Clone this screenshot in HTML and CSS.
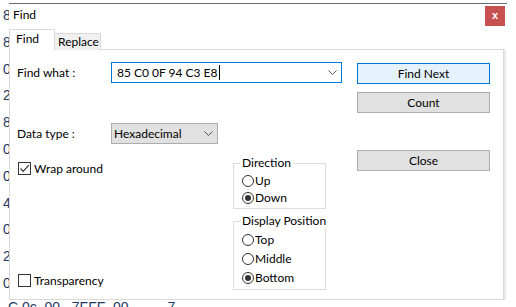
FILE: index.html
```html
<!DOCTYPE html>
<html lang="en">
<head>
<meta charset="UTF-8">
<title>Find</title>
<link rel="stylesheet" href="styles.css">
</head>
<body>
<div class="editor">
  <div class="editor-col">8<br>8<br>0<br>2<br>8<br>0<br>0<br>4<br>0<br>2<br>0</div>
  <div class="editor-row">C 0c  00   7FFF  00    ..    7</div>
</div>

<div class="dialog">
  <div class="titlebar">
    <span class="title">Find</span>
    <div class="close">x</div>
  </div>
  <div class="tabs">
    <div class="tab active">Find</div>
    <div class="tab">Replace</div>
  </div>
  <div class="panel">
    <div class="fields">
      <div class="row">
        <label class="label">Find what :</label>
        <div class="combo">
          <span>85 C0 0F 94 C3 E8</span><span class="caret"></span>
          <svg class="chevron" width="9" height="5" viewBox="0 0 9 5"><polyline points="0.5,0.5 4.5,4.5 8.5,0.5" fill="none" stroke="#555" stroke-width="1"/></svg>
        </div>
      </div>
      <div class="row type-row">
        <label class="label">Data type :</label>
        <div class="select">
          <span>Hexadecimal</span>
          <svg class="chevron" width="9" height="5" viewBox="0 0 9 5"><polyline points="0.5,0.5 4.5,4.5 8.5,0.5" fill="none" stroke="#555" stroke-width="1"/></svg>
        </div>
      </div>
      <div class="options">
        <div class="checks">
          <div class="check">
            <span class="box"><svg width="11" height="11" viewBox="0 0 11 11"><polyline points="1.5,5.5 4.2,8.3 9.8,2.2" fill="none" stroke="#333" stroke-width="1.2"/></svg></span>
            Wrap around
          </div>
          <div class="check"><span class="box"></span>Transparency</div>
        </div>
        <div class="groups">
          <fieldset class="group direction">
            <legend>Direction</legend>
            <div class="radio"><span class="circle"></span>Up</div>
            <div class="radio"><span class="circle on"></span>Down</div>
          </fieldset>
          <fieldset class="group position">
            <legend>Display Position</legend>
            <div class="radio"><span class="circle"></span>Top</div>
            <div class="radio"><span class="circle"></span>Middle</div>
            <div class="radio"><span class="circle on"></span>Bottom</div>
          </fieldset>
        </div>
      </div>
    </div>
    <div class="buttons">
      <div class="btn default">Find Next</div>
      <div class="btn count">Count</div>
      <div class="btn close-btn">Close</div>
    </div>
  </div>
</div>
</body>
</html>
```

FILE: styles.css
```css
* {
  box-sizing: border-box;
}
body {
  margin: 0;
  width: 516px;
  height: 307px;
  overflow: hidden;
  position: relative;
  background: #fff;
  font-family: Lato, "Noto Sans", sans-serif;
  font-size: 12px;
  color: #000;
}

/* editor text behind the dialog */
.editor {
  font-family: "Liberation Sans", sans-serif;
  font-size: 14px;
  color: #1f3b63;
}
.editor-col {
  padding: 2px 0 0 3px;
  line-height: 26.8px;
}
.editor-row {
  white-space: pre;
  padding-left: 8px;
  line-height: 20px;
}

/* dialog */
.dialog {
  position: absolute;
  left: 9px;
  top: 3px;
  width: 498px;
  height: 297px;
  background: #fff;
  border-top: 1px solid #6d6d6d;
}
.titlebar {
  height: 25px;
  display: flex;
  justify-content: space-between;
  align-items: flex-start;
  padding: 2px 2px 0 4px;
}
.title {
  line-height: 18px;
}
.close {
  width: 20px;
  height: 20px;
  background: #c75050;
  color: #fff;
  font: bold 11px "Liberation Sans", sans-serif;
  display: flex;
  align-items: center;
  justify-content: center;
  padding-bottom: 2px;
}
.tabs {
  display: flex;
  align-items: flex-end;
  height: 21px;
  position: relative;
  z-index: 1;
}
.tab {
  width: 46px;
  height: 17px;
  padding-left: 3px;
  border: 1px solid #d9d9d9;
  border-left: none;
  border-bottom: none;
  background: #f0f0f0;
  line-height: 15px;
}
.tab.active {
  width: 46px;
  height: 21px;
  padding-left: 6px;
  border-left: 1px solid #d9d9d9;
  background: #fff;
  line-height: 18px;
}
.panel {
  margin-top: -1px;
  width: 495px;
  height: 251px;
  border: 1px solid #d9d9d9;
  box-shadow: 2px 0 0 #e8e8e8;
  padding: 12px 0 0 7px;
  display: flex;
}
.fields {
  width: 325px;
}
.row {
  display: flex;
  align-items: center;
  height: 21px;
}
.type-row {
  margin-top: 40px;
}
.label {
  width: 94px;
}
.combo {
  width: 231px;
  height: 21px;
  border: 1px solid #0078d7;
  display: flex;
  align-items: center;
  padding: 0 4px 0 5px;
}
.caret {
  width: 1px;
  height: 15px;
  background: #000;
  margin-left: 1px;
}
.chevron {
  margin-left: auto;
}
.select {
  width: 107px;
  height: 21px;
  border: 1px solid #adadad;
  background: #e1e1e1;
  display: flex;
  align-items: center;
  padding: 0 4px 0 2px;
}
.options {
  margin-top: 12px;
  display: flex;
}
.checks {
  width: 216px;
  display: flex;
  flex-direction: column;
  justify-content: space-between;
  padding: 6px 0 3px 1px;
}
.check {
  display: flex;
  align-items: center;
  gap: 3px;
  height: 13px;
  line-height: 13px;
}
.box {
  width: 13px;
  height: 13px;
  border: 1px solid #333;
  background: #fff;
  display: flex;
  align-items: center;
  justify-content: center;
}
.groups {
  width: 93px;
}
.group {
  margin: 0;
  min-width: 0;
  border: 1px solid #dcdcdc;
  padding: 2px 0 2px 8px;
}
.group legend {
  padding: 0 2px;
  margin-left: -2px;
  line-height: 14px;
  white-space: nowrap;
}
.direction .radio {
  height: 17px;
}
.position {
  margin-top: 5px;
}
.position .radio {
  height: 19px;
}
.radio {
  display: flex;
  align-items: center;
  gap: 1px;
}
.circle {
  width: 12px;
  height: 12px;
  border: 1px solid #333;
  border-radius: 50%;
  display: flex;
  align-items: center;
  justify-content: center;
}
.circle.on::after {
  content: '';
  width: 6px;
  height: 6px;
  border-radius: 50%;
  background: #333;
}
.buttons {
  margin-left: 15px;
  width: 133px;
  padding-top: 1px;
}
.btn {
  height: 21px;
  border: 1px solid #adadad;
  background: #e1e1e1;
  text-align: center;
  line-height: 19px;
}
.btn.default {
  border-color: #0078d7;
  background: #e5f1fb;
}
.count {
  margin-top: 8px;
}
.close-btn {
  margin-top: 37px;
}
```
